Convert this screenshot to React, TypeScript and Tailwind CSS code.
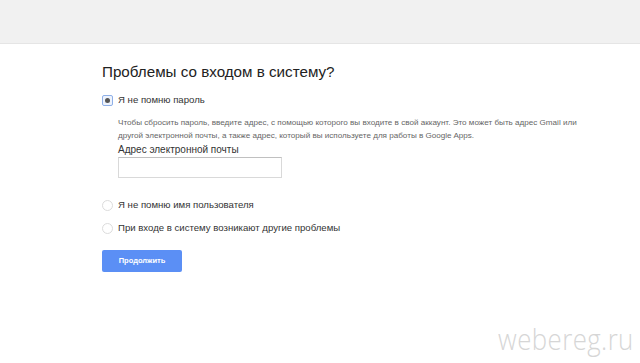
import { useState } from 'react';

type Option = 'password' | 'username' | 'other';

function Radio({ checked }: { checked: boolean }) {
  if (checked) {
    return (
      <span className="flex h-[11px] w-[11px] shrink-0 items-center justify-center rounded-[2px] border border-[#8fb0e8] bg-[#eef3fc]">
        <span className="h-[5px] w-[5px] rounded-full bg-[#555]" />
      </span>
    );
  }
  return <span className="h-[11px] w-[11px] shrink-0 rounded-full border border-[#dcdcdc] bg-white" />;
}

export default function App() {
  const [choice, setChoice] = useState<Option>('password');

  return (
    <div className="relative h-[363px] w-[640px] overflow-hidden bg-white font-['Liberation_Sans',Arial,sans-serif]">
      {/* top grey bar */}
      <div className="h-[44px] border-b border-[#e5e5e5] bg-[#f1f1f1]" />

      <div className="pl-[102px] pt-[18px]">
        <h1 className="text-[15.2px] leading-[20px] text-[#222]">Проблемы со входом в систему?</h1>

        <button
          onClick={() => setChoice('password')}
          className="mt-[11px] flex items-center gap-[5px] text-[9.6px] leading-[14px] text-[#333]"
        >
          <Radio checked={choice === 'password'} />
          Я не помню пароль
        </button>

        {choice === 'password' && (
          <div className="pl-[16px] pt-[9px]">
            <p className="w-[470px] text-[8.1px] leading-[13px] text-[#666]">
              Чтобы сбросить пароль, введите адрес, с помощью которого вы входите в свой аккаунт. Это может быть адрес Gmail или
              другой электронной почты, а также адрес, который вы используете для работы в Google Apps.
            </p>
            <label className="mt-[1px] block text-[10px] leading-[13px] text-[#333]">Адрес электронной почты</label>
            <input
              type="text"
              className="mt-[1px] block h-[21px] w-[164px] border border-[#d9d9d9] border-t-[#c0c0c0] bg-white px-1 text-[10px] outline-none"
            />
          </div>
        )}

        <button
          onClick={() => setChoice('username')}
          className="mt-[20px] flex items-center gap-[5px] text-[9.6px] leading-[14px] text-[#333]"
        >
          <Radio checked={choice === 'username'} />
          Я не помню имя пользователя
        </button>

        <button
          onClick={() => setChoice('other')}
          className="mt-[9px] flex items-center gap-[5px] text-[9.6px] leading-[14px] text-[#333]"
        >
          <Radio checked={choice === 'other'} />
          При входе в систему возникают другие проблемы
        </button>

        <button className="mt-[15px] h-[22px] w-[80px] rounded-[2px] bg-[#5b8ff5] text-[7.5px] font-bold text-white">
          Продолжить
        </button>
      </div>

      {/* watermark */}
      <div className="absolute bottom-[2px] right-[6px] origin-right scale-x-[0.86] font-['Open_Sans',sans-serif] text-[30px] font-light tracking-[0.5px] text-[#d6d6d6]">
        webereg.ru
      </div>
    </div>
  );
}
